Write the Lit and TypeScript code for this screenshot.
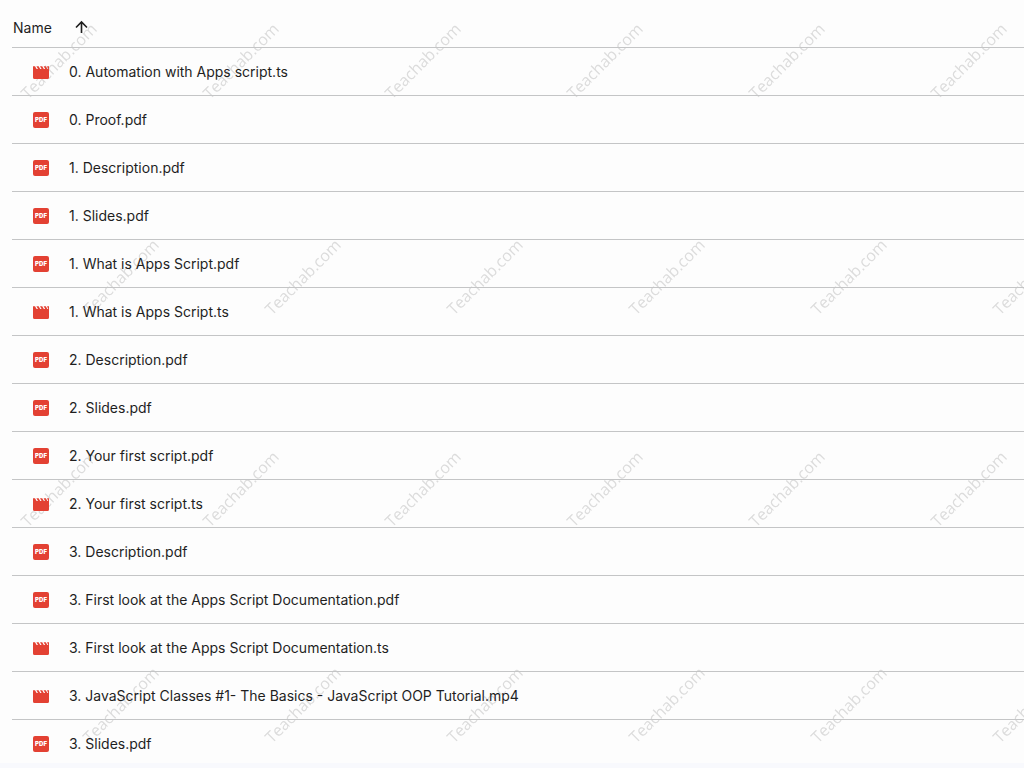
import { LitElement, html, css, svg } from "lit";
import { customElement, property } from "lit/decorators.js";

type Kind = "video" | "pdf";

const FILES: { name: string; kind: Kind }[] = [
  { name: "0. Automation with Apps script.ts", kind: "video" },
  { name: "0. Proof.pdf", kind: "pdf" },
  { name: "1. Description.pdf", kind: "pdf" },
  { name: "1. Slides.pdf", kind: "pdf" },
  { name: "1. What is Apps Script.pdf", kind: "pdf" },
  { name: "1. What is Apps Script.ts", kind: "video" },
  { name: "2. Description.pdf", kind: "pdf" },
  { name: "2. Slides.pdf", kind: "pdf" },
  { name: "2. Your first script.pdf", kind: "pdf" },
  { name: "2. Your first script.ts", kind: "video" },
  { name: "3. Description.pdf", kind: "pdf" },
  { name: "3. First look at the Apps Script Documentation.pdf", kind: "pdf" },
  { name: "3. First look at the Apps Script Documentation.ts", kind: "video" },
  { name: "3. JavaScript Classes #1- The Basics - JavaScript OOP Tutorial.mp4", kind: "video" },
  { name: "3. Slides.pdf", kind: "pdf" },
];

@customElement("file-icon")
class FileIcon extends LitElement {
  @property() kind: Kind = "pdf";

  static styles = css`
    :host { display: block; width: 16px; height: 16px; }
    .icon { display: block; width: 16px; height: 16px; }
    .red { fill: #e34133; }
    .label { fill: #fff; font: 900 6px "Inter", sans-serif; text-anchor: middle; }
  `;

  render() {
    const shape = this.kind === "pdf"
      ? svg`<rect class="red" width="16" height="16" rx="2"/><text class="label" x="8" y="10">PDF</text>`
      : svg`<path class="red" d="M0 2.200L2 2.200L3.600 5H5L3.400 2.200H5.600L7.200 5H8.600L7 2.200H9.200L10.800 5H12.200L10.600 2.200H12.800L14.400 5H15.300L14 2.200H16V13.500A1.500 1.500 0 0 1 14.500 15H1.500A1.500 1.500 0 0 1 0 13.500Z"/>`;
    return html`<svg class="icon" viewBox="0 0 16 16" aria-hidden="true">${shape}</svg>`;
  }
}

@customElement("water-mark")
class WaterMark extends LitElement {
  static styles = css`
    :host { display: block; pointer-events: none; }
    .sheet { display: block; width: 100%; height: 100%; }
    .mark { fill: #dcdcdc; font: 400 16px "Open Sans", sans-serif; text-anchor: middle; }
  `;

  render() {
    return html`<svg class="sheet" aria-hidden="true">
      <defs>
        <pattern id="marks" x="-33" y="-47" width="182" height="428" patternUnits="userSpaceOnUse">
          <text class="mark" transform="translate(96 112) rotate(-45)">Teachab.com</text>
          <text class="mark" transform="translate(158 328) rotate(-45)">Teachab.com</text>
          <text class="mark" transform="translate(-24 328) rotate(-45)">Teachab.com</text>
        </pattern>
      </defs>
      <rect width="100%" height="100%" fill="url(#marks)"/>
    </svg>`;
  }
}

@customElement("app-root")
class AppRoot extends LitElement {
  static styles = css`
    :host {
      display: block;
      min-height: 100vh;
      background: #f8f9fd;
      color: #1f1f1f;
      font: 400 14px/20px "Inter", sans-serif;
    }
    .panel { position: relative; padding-left: 12px; background: #fdfdfd; }
    .marks { position: absolute; inset: 0; }
    .files { position: relative; width: 100%; border-collapse: separate; border-spacing: 0; }
    .head, .cell { padding: 0; border-bottom: 1px solid #c4c5c6; text-align: left; font-weight: 400; }
    .sort {
      display: flex;
      align-items: center;
      gap: 20px;
      padding: 18px 0 9px 1px;
      border: 0;
      background: none;
      color: inherit;
      font: inherit;
      cursor: pointer;
    }
    .arrow { display: block; width: 20px; height: 20px; }
    .file {
      display: flex;
      align-items: center;
      gap: 20px;
      padding: 14px 0 13px 21px;
      color: inherit;
      text-decoration: none;
    }
    .row:last-child .cell { border-bottom: 0; }
    .row:last-child .file { padding-bottom: 9px; }
  `;

  render() {
    return html`<main class="panel">
      <water-mark class="marks"></water-mark>
      <table class="files">
        <thead>
          <tr>
            <th class="head" scope="col" aria-sort="ascending">
              <button class="sort" type="button">
                Name
                <svg class="arrow" viewBox="0 0 20 20" fill="none" stroke="#1f1f1f" stroke-width="1.600" aria-hidden="true">
                  <path d="M9.500 15V4M4 9.500l5.500-5.500 5.500 5.500"/>
                </svg>
              </button>
            </th>
          </tr>
        </thead>
        <tbody>
          ${FILES.map((f) => html`<tr class="row">
            <td class="cell">
              <a class="file" href="#"><file-icon .kind=${f.kind}></file-icon><span>${f.name}</span></a>
            </td>
          </tr>`)}
        </tbody>
      </table>
    </main>`;
  }
}
